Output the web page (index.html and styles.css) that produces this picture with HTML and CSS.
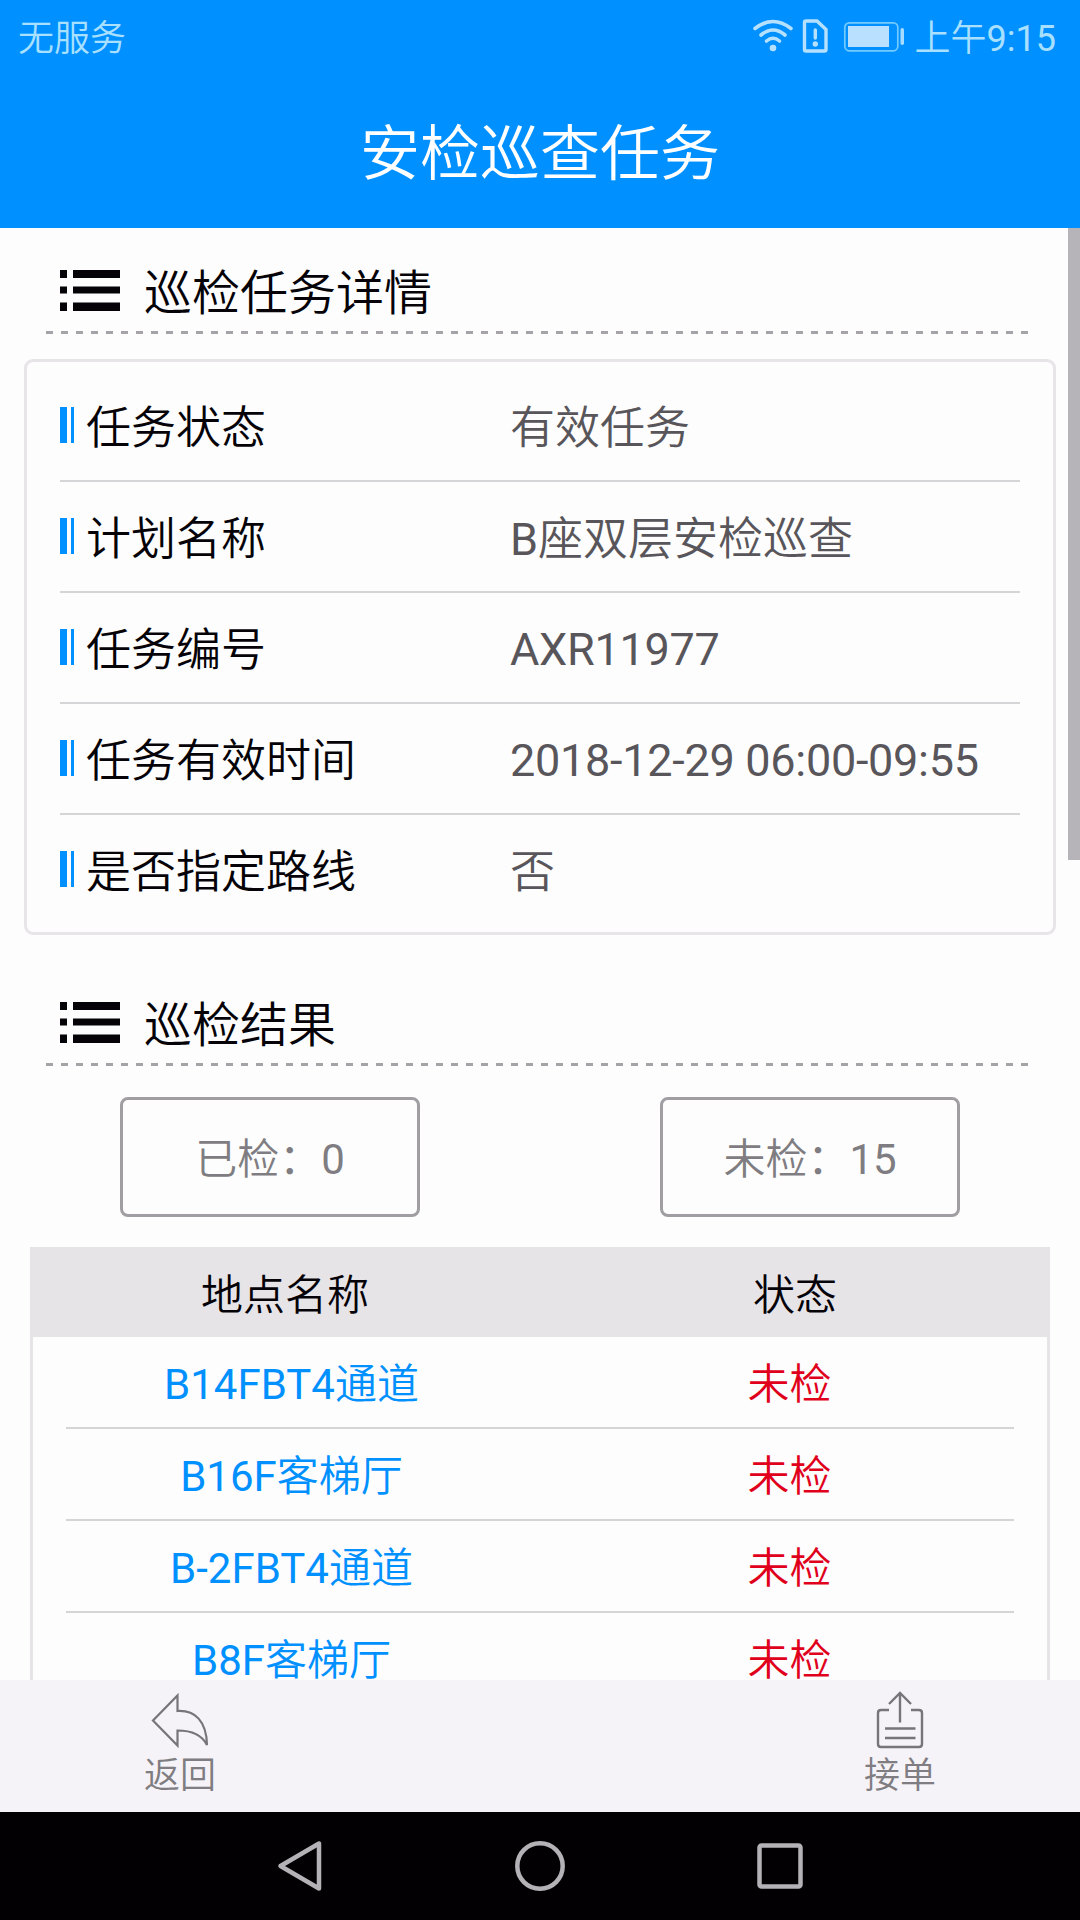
FILE: index.html
```html
<!DOCTYPE html>
<html lang="zh-CN">
<head>
    <meta charset="UTF-8">
    <meta name="viewport" content="width=device-width, initial-scale=1.0">
    <title>安检巡查任务</title>
    <link rel="stylesheet" href="styles.css">
</head>
<body>

    <header class="header">
        <div class="status-bar">
            <span>无服务</span>
            <div class="status-right">
                <svg class="status-icons" width="152" height="36" viewBox="0 0 152 36">
                    <!-- wifi -->
                    <g fill="none" stroke="#b5e1ff" stroke-width="3.6" stroke-linecap="round">
                        <path d="M3 10.5Q21 -3.5 39 10.5"/>
                        <path d="M9 17Q21 7 33 17"/>
                        <path d="M14.500 23Q21 17.500 27.500 23"/>
                    </g>
                    <circle cx="21" cy="30" r="3.300" fill="#b5e1ff"/>
                    <!-- sim card -->
                    <path d="M54 3H65L74 11.500V31.500Q74 33 72.500 33H54Q52.500 33 52.500 31.500V4.500Q52.500 3 54 3Z" fill="none" stroke="#b5e1ff" stroke-width="3.400"/>
                    <path d="M63.300 12V20" stroke="#b5e1ff" stroke-width="3.400" stroke-linecap="round"/>
                    <circle cx="63.300" cy="26" r="2.700" fill="#b5e1ff"/>
                    <!-- battery -->
                    <rect x="92.800" y="4.800" width="53" height="28" rx="4.500" fill="none" stroke="#74cbff" stroke-width="1.700"/>
                    <rect x="96" y="8" width="41" height="21" fill="#b9e0ff"/>
                    <rect x="148.500" y="10" width="3.500" height="17" rx="1.700" fill="#a5dcff"/>
                </svg>
                <span>上午<span class="latin">9:15</span></span>
            </div>
        </div>
        <h1>安检巡查任务</h1>
    </header>

    <main class="content">
        <div class="scrollbar"></div>

        <div class="section-title">
            <svg width="60" height="41" viewBox="0 0 60 41">
                <path d="M0 0H7V8H0ZM13 0H60V8H13ZM0 16.500H7V23.500H0ZM13 16.500H60V23.500H13ZM0 32.500H7V41H0ZM13 32.500H60V41H13Z" fill="#050308"/>
            </svg>
            <h2>巡检任务详情</h2>
        </div>
        <div class="dashed"></div>

        <div class="detail-card">
            <div class="detail-row">
                <span class="label">任务状态</span>
                <span class="value">有效任务</span>
            </div>
            <div class="detail-row">
                <span class="label">计划名称</span>
                <span class="value"><span class="latin">B</span>座双层安检巡查</span>
            </div>
            <div class="detail-row">
                <span class="label">任务编号</span>
                <span class="value number">AXR11977</span>
            </div>
            <div class="detail-row">
                <span class="label">任务有效时间</span>
                <span class="value number">2018-12-29 06:00-09:55</span>
            </div>
            <div class="detail-row">
                <span class="label">是否指定路线</span>
                <span class="value">否</span>
            </div>
        </div>

        <div class="section-title result-title">
            <svg width="60" height="41" viewBox="0 0 60 41">
                <path d="M0 0H7V8H0ZM13 0H60V8H13ZM0 16.500H7V23.500H0ZM13 16.500H60V23.500H13ZM0 32.500H7V41H0ZM13 32.500H60V41H13Z" fill="#050308"/>
            </svg>
            <h2>巡检结果</h2>
        </div>
        <div class="dashed"></div>

        <div class="counts">
            <button class="count-btn">已检<span class="latin">：0</span></button>
            <button class="count-btn">未检<span class="latin">：15</span></button>
        </div>

        <div class="place-list">
            <div class="place-head">
                <span>地点名称</span>
                <span>状态</span>
            </div>
            <div class="place-row">
                <span class="place"><span class="latin">B14FBT4</span>通道</span>
                <span class="state">未检</span>
            </div>
            <div class="place-row">
                <span class="place"><span class="latin">B16F</span>客梯厅</span>
                <span class="state">未检</span>
            </div>
            <div class="place-row">
                <span class="place"><span class="latin">B-2FBT4</span>通道</span>
                <span class="state">未检</span>
            </div>
            <div class="place-row">
                <span class="place"><span class="latin">B8F</span>客梯厅</span>
                <span class="state">未检</span>
            </div>
        </div>
    </main>

    <footer class="toolbar">
        <a class="tool">
            <svg width="60" height="60" viewBox="0 0 60 60" fill="none" stroke="#77757a" stroke-width="2.200">
                <path d="M27.500 6.500V22C45 21 56.500 32 57 56C52 46 43 41.500 27.500 41.500V56.500L3 31.500Z"/>
            </svg>
            <span>返回</span>
        </a>
        <a class="tool">
            <svg width="60" height="60" viewBox="0 0 60 60" fill="none" stroke="#77757a" stroke-width="2.400">
                <path d="M19 21H11Q8 21 8 24V55Q8 58 11 58H49Q52 58 52 55V24Q52 21 49 21H41"/>
                <path d="M30 33.500V4M19 15L30 4L41 15M15 39.500H45.500M15 49H45.500"/>
            </svg>
            <span>接单</span>
        </a>
    </footer>

    <nav class="nav-bar">
        <svg width="60" height="60" viewBox="0 0 60 60" fill="none" stroke="#b5b2b7" stroke-width="4.500" stroke-linejoin="round">
            <path d="M49 7.500V52.500L10.500 30Z"/>
        </svg>
        <svg width="60" height="60" viewBox="0 0 60 60" fill="none" stroke="#b5b2b7" stroke-width="4.500">
            <circle cx="30" cy="30" r="22.700"/>
        </svg>
        <svg width="60" height="60" viewBox="0 0 60 60" fill="none" stroke="#b5b2b7" stroke-width="4.500">
            <rect x="9.500" y="9.500" width="41" height="41" rx="2"/>
        </svg>
    </nav>

</body>
</html>
```
FILE: styles.css
```css
*, *::before {
    box-sizing: border-box;
}

body {
    margin: 0;
    height: 1920px;
    display: flex;
    flex-direction: column;
    overflow: hidden;
    font-family: Roboto, "Noto Sans CJK SC", sans-serif;
    font-weight: 350;
    background-color: #fdfdfd;
    color: #050308;
}

h1, h2 {
    margin: 0;
    font-weight: 350;
}

.latin {
    font-weight: 400;
}

/* Header */
.header {
    height: 228px;
    flex-shrink: 0;
    background-color: #0090ff;
    color: #fff;
}

.status-bar {
    height: 70px;
    padding: 0 24px 0 18px;
    display: flex;
    align-items: center;
    justify-content: space-between;
    font-size: 36px;
    color: #a9e0ff;
}

.status-right {
    display: flex;
    align-items: center;
    gap: 11px;
}

.status-icons {
    margin-top: 2px;
}

.header h1 {
    font-size: 60px;
    line-height: 170px;
    text-align: center;
}

/* Scrolling content */
.content {
    position: relative;
    height: 1452px;
    flex-shrink: 0;
    overflow: hidden;
    padding-top: 32px;
}

.scrollbar {
    position: absolute;
    top: 0;
    right: 0;
    width: 12px;
    height: 632px;
    background-color: #b7b4b9;
}

.section-title {
    height: 70px;
    padding: 0 0 2px 60px;
    display: flex;
    align-items: center;
    gap: 24px;
}

.section-title svg {
    margin-bottom: 8px;
}

.section-title h2 {
    font-size: 48px;
    line-height: 68px;
}

.result-title {
    margin-top: 57px;
}

.dashed {
    height: 3px;
    margin: 1px 51px 0 46px;
    background: repeating-linear-gradient(to right, #a5a3a7 0, #a5a3a7 7px, transparent 7px, transparent 15px);
}

.detail-card {
    margin: 25px 24px 0;
    padding: 9px 33px 6px;
    border: 3px solid #e7e5e8;
    border-radius: 9px;
}

.detail-row {
    height: 111px;
    padding-bottom: 2px;
    display: flex;
    align-items: center;
    font-size: 45px;
    border-bottom: 2px solid #d5d4d7;
}

.detail-row:last-child {
    padding-bottom: 4px;
    border-bottom: none;
}

.detail-row::before {
    content: "";
    width: 14px;
    height: 36px;
    margin-right: 12px;
    border-left: 7px solid #0090ff;
    border-right: 3px solid #0090ff;
}

.label {
    width: 424px;
}

.value {
    color: #59565b;
}

.number {
    padding-top: 5px;
    font-weight: 400;
    letter-spacing: -0.28px;
}

/* Checked / unchecked counters */
.counts {
    margin-top: 31px;
    display: flex;
    justify-content: space-around;
}

.count-btn {
    width: 300px;
    height: 120px;
    padding: 0 0 3px;
    border: 3px solid #a09ea2;
    border-radius: 8px;
    background: none;
    font-family: inherit;
    font-size: 42px;
    font-weight: 350;
    color: #7f7d81;
}

/* Place list */
.place-list {
    margin: 30px 30px 0;
    border: 3px solid #e7e4e8;
    border-top: none;
    font-size: 42px;
    text-align: center;
}

.place-head {
    height: 90px;
    margin: 0 -3px;
    padding-bottom: 2px;
    display: grid;
    grid-template-columns: 1fr 1fr;
    align-items: center;
    background-color: #e7e4e8;
}

.place-row {
    height: 92px;
    margin: 0 33px;
    padding-bottom: 3px;
    display: flex;
    align-items: center;
    justify-content: space-between;
    border-bottom: 2px solid #d5d4d7;
}

.place {
    width: 451px;
    color: #0090ff;
}

.state {
    width: 449px;
    color: #e0001b;
}

/* Bottom toolbar */
.toolbar {
    height: 132px;
    flex-shrink: 0;
    display: flex;
    justify-content: space-between;
    background-color: #f5f3f7;
}

.tool {
    width: 360px;
    padding-top: 9px;
    display: flex;
    flex-direction: column;
    align-items: center;
    font-size: 36px;
    line-height: 54px;
    color: #7f7d81;
}

/* Android navigation keys */
.nav-bar {
    height: 108px;
    flex-shrink: 0;
    display: flex;
    justify-content: center;
    align-items: center;
    gap: 180px;
    background-color: #020003;
}
```
